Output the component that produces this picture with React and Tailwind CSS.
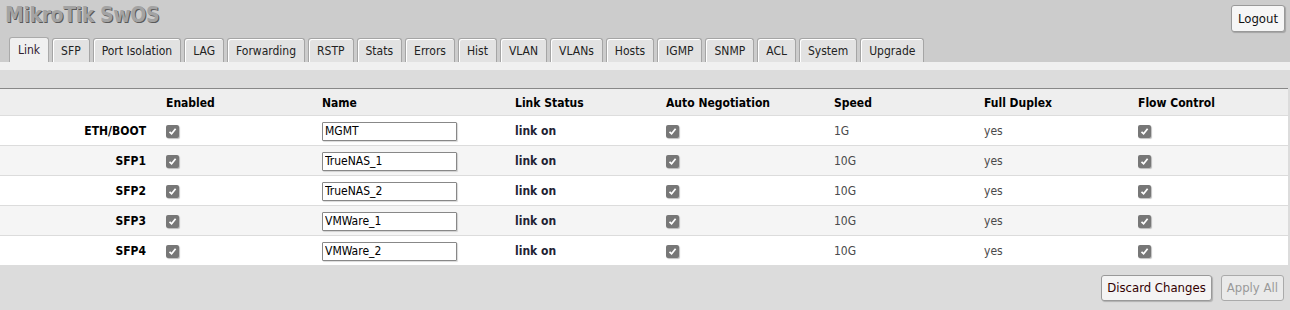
import React from 'react';

const tabs = ['Link', 'SFP', 'Port Isolation', 'LAG', 'Forwarding', 'RSTP', 'Stats', 'Errors', 'Hist', 'VLAN', 'VLANs', 'Hosts', 'IGMP', 'SNMP', 'ACL', 'System', 'Upgrade'];

const ports = [
  { port: 'ETH/BOOT', name: 'MGMT', speed: '1G' },
  { port: 'SFP1', name: 'TrueNAS_1', speed: '10G' },
  { port: 'SFP2', name: 'TrueNAS_2', speed: '10G' },
  { port: 'SFP3', name: 'VMWare_1', speed: '10G' },
  { port: 'SFP4', name: 'VMWare_2', speed: '10G' },
];

const cols = 'grid grid-cols-[166px_156px_193px_151px_168px_150px_154px_150px] items-center';

const Check = () => (
  <span className="inline-flex h-[13px] w-[13px] items-center justify-center rounded-[2px] bg-[#777] shadow-[1px_1px_1px_rgba(0,0,0,0.25)]">
    <svg width="9" height="9" viewBox="0 0 9 9">
      <path d="M1.5 4.8 L3.6 6.8 L7.6 1.8" fill="none" stroke="#fff" strokeWidth="1.7" />
    </svg>
  </span>
);

export default function App() {
  return (
    <div className="w-[1290px] h-[310px] overflow-hidden bg-[#dcdcdc] text-[12px] text-black" style={{ fontFamily: '"DejaVu Sans Condensed", Tahoma, "Liberation Sans", sans-serif' }}>
      {/* header */}
      <div className="bg-[#cccccc] h-[62px] flex flex-col">
        <div className="flex items-start justify-between px-[5px] pt-[4px] h-[37px]">
          <div className="text-[21px] font-bold leading-[22px] text-[#a3a3a3] [text-shadow:1px_1px_0_#5a5a5a] tracking-[-0.4px]">MikroTik SwOS</div>
          <button className="mt-[1px] h-[27px] px-[6px] rounded-[3px] border border-[#999] bg-[#f6f6f6] text-[13px] text-[#111] shadow-[1px_1px_1px_rgba(0,0,0,0.2)]">Logout</button>
        </div>
        <div className="flex items-end gap-[3px] pl-[9px] h-[25px]">
          {tabs.map((t, i) => (
            <div
              key={t}
              className={`px-[8px] flex items-center rounded-t-[3px] border border-b-0 ${i === 0 ? 'h-[25px] bg-[#f0f0f0] border-[#aaa] text-[#302030]' : 'h-[24px] bg-[#e2e2e2] border-[#a5a5a5] text-[#222] shadow-[inset_1px_1px_0_#fff]'}`}
            >
              {t}
            </div>
          ))}
        </div>
      </div>

      {/* body */}
      <div className="bg-[#f0f0f0] h-[8px]" />
      <div className="bg-[#dcdcdc] h-[19px] border-b border-[#888] mr-[2px]" />
      <div className="mr-[2px]">
        <div className={`${cols} h-[27px] pt-[1px] bg-[#eeeeee] border-b border-[#ddd] font-bold`}>
          <div />
          <div>Enabled</div>
          <div>Name</div>
          <div>Link Status</div>
          <div>Auto Negotiation</div>
          <div>Speed</div>
          <div>Full Duplex</div>
          <div>Flow Control</div>
        </div>
        {ports.map((p, i) => (
          <div key={p.port} className={`${cols} h-[30px] pt-[1px] border-b border-[#dcdcdc] ${i % 2 ? 'bg-[#f5f5f5]' : 'bg-white'}`}>
            <div className="text-right pr-[20px] font-bold">{p.port}</div>
            <div className="flex"><Check /></div>
            <div>
              <input
                readOnly
                value={p.name}
                className="w-[135px] h-[19px] px-[2px] border border-[#888] rounded-[1px] bg-white text-[12px] text-black shadow-[1px_1px_1px_rgba(0,0,0,0.15)] outline-none"
                style={{ fontFamily: 'inherit' }}
              />
            </div>
            <div className="font-bold text-[#222233]">link on</div>
            <div className="flex"><Check /></div>
            <div className="text-[#4a4a4a]">{p.speed}</div>
            <div className="text-[#4a4a4a]">yes</div>
            <div className="flex"><Check /></div>
          </div>
        ))}
      </div>

      {/* footer */}
      <div className="flex justify-end gap-[9px] pr-[6px] pt-[9px]">
        <button className="h-[26px] px-[5px] rounded-[3px] border border-[#999] bg-[#f4f4f4] text-[13px] text-[#300] shadow-[1px_1px_1px_rgba(0,0,0,0.2)]">Discard Changes</button>
        <button className="h-[26px] px-[5px] rounded-[3px] border border-[#aaa] bg-[#eaeaea] text-[13px] text-[#999]">Apply All</button>
      </div>
    </div>
  );
}
